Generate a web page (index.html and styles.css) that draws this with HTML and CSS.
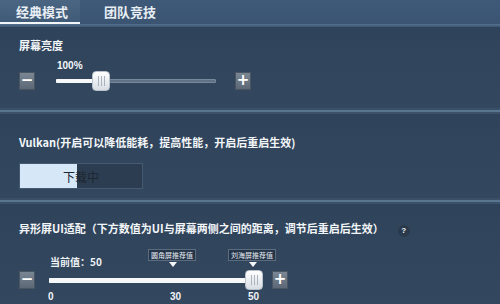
FILE: index.html
```html
<!DOCTYPE html>
<html lang="zh">
<head>
<meta charset="utf-8">
<link rel="stylesheet" href="styles.css">
</head>
<body>
<div class="screen">
  <div class="tabs">
    <div class="tab active">经典模式</div>
    <div class="tab">团队竞技</div>
  </div>
  <div class="tabline"></div>

  <div class="section s1">
    <div class="label">屏幕亮度</div>
    <div class="slider-row">
      <div class="btn">−</div>
      <div class="track t1">
        <div class="fill" style="width:27%"></div>
        <div class="value">100%</div>
        <div class="thumb" style="left:35px"><i></i><i></i><i></i></div>
      </div>
      <div class="btn">+</div>
    </div>
  </div>
  <div class="sep"></div>

  <div class="section s2">
    <div class="label">Vulkan(开启可以降低能耗，提高性能，开启后重启生效)</div>
    <div class="progress">
      <div class="pfill" style="width:47%"></div>
      <span class="ptext">下载中</span>
    </div>
  </div>
  <div class="sep"></div>

  <div class="section s3">
    <div class="label">异形屏UI适配（下方数值为UI与屏幕两侧之间的距离，调节后重启后生效）<span class="help">?</span></div>
    <div class="slider3">
      <div class="cur">当前值：50</div>
      <div class="slider-row r3">
        <div class="btn">−</div>
        <div class="track t3">
          <div class="fill" style="width:100%"></div>
          <div class="tip" style="left:98px">圆角屏推荐值</div>
          <div class="tip" style="left:178px">刘海屏推荐值</div>
          <div class="thumb" style="left:195px"><i></i><i></i><i></i></div>
          <div class="tick" style="left:-2px">0</div>
          <div class="tick" style="left:120px">30</div>
          <div class="tick" style="left:198px">50</div>
        </div>
        <div class="btn">+</div>
      </div>
    </div>
  </div>
</div>
</body>
</html>
```
FILE: styles.css
```css
* { box-sizing: border-box; margin: 0; padding: 0; }
html, body { width: 500px; height: 304px; overflow: hidden; }
body {
  font-family: "Noto Sans CJK SC", "Noto Sans", sans-serif;
  background: #31455c;
  color: #f2f5f8;
}
.screen { width: 500px; height: 304px; display: flex; flex-direction: column; }

.tabs {
  height: 24px;
  display: flex;
  background: linear-gradient(#3f5a78, #3a5472);
}
.tab {
  width: 80px;
  font-size: 13px;
  font-weight: bold;
  line-height: 24px;
  color: #e8eef4;
  padding-left: 22px;
}
.tab.active {
  background: linear-gradient(#4a6683, #3f5a77);
  padding-left: 16px;
  box-shadow: inset 0 -2px 0 #f4f7fa;
}
.tab + .tab { padding-left: 24px; }
.tabline { height: 3px; background: linear-gradient(#56728f, #3d5570); }

.section { background: linear-gradient(#2f435a, #33485f); padding-left: 19px; }
.label { font-size: 11px; font-weight: bold; line-height: 14px; color: #f3f6f9; }

.s1 { height: 81px; padding-top: 11px; }
.sep {
  height: 6px;
  background: linear-gradient(#3a5069 0, #3a5069 2px, #5a7590 2px, #5a7590 4px, #3c526b 4px);
}

.slider-row { display: flex; align-items: center; }
.s1 .slider-row { margin-top: 20px; }
.btn {
  width: 16px; height: 18px;
  background: linear-gradient(#7a8694, #5c6876);
  border: 1px solid #4a5562;
  color: #fff;
  font-size: 15px;
  font-weight: bold;
  line-height: 15px;
  text-align: center;
  font-family: "DejaVu Sans", sans-serif;
  flex: none;
}
.track {
  position: relative;
  height: 4px;
  background: #5f7184;
  border: 1px solid #77889a;
  border-radius: 1px;
}
.fill {
  position: absolute; left: -1px; top: -1px; bottom: -1px;
  background: #f6f8fa;
  border-radius: 1px;
}
.t1 { width: 160px; margin-left: 21px; margin-right: 19px; }
.value {
  position: absolute; left: 0; top: -20px;
  font-size: 10px; font-weight: bold; color: #f5f7f9;
  font-family: "Liberation Sans", sans-serif;
}
.thumb {
  position: absolute; top: -9px;
  width: 18px; height: 20px;
  background: linear-gradient(#ffffff, #d7dde3);
  border-radius: 4px;
  border: 1px solid #b9c2cb;
  display: flex; justify-content: center; align-items: center; gap: 2px;
}
.thumb i { display: block; width: 1px; height: 10px; background: #aab3bd; }

.s2 { height: 84px; padding-top: 21px; }
.progress {
  position: relative;
  margin-top: 14px;
  width: 124px; height: 26px;
  background: #2c3d51;
  border: 1px solid #445a72;
}
.pfill { position: absolute; left: 0; top: 0; bottom: 0; background: #d6e8f8; }
.ptext {
  position: absolute; left: 43px; top: 4px;
  font-size: 12px; color: #1e2630;
}

.s3 { flex: 1; padding-top: 17px; }
.help {
  display: inline-block;
  width: 12px; height: 12px;
  margin-left: 14px;
  border-radius: 50%;
  background: #2a3a4c;
  font-size: 8px; line-height: 12px; text-align: center;
  font-family: "Liberation Sans", sans-serif;
}
.slider3 { padding-top: 19px; }
.cur {
  margin-left: 31px;
  font-size: 10px; font-weight: bold; line-height: 12px; color: #eef2f6;
}
.r3 { margin-top: 3px; }
.t3 {
  width: 206px; margin-left: 14px; margin-right: 17px;
  height: 5px; border-color: #f6f8fa;
}
.tip {
  position: absolute; top: -30px;
  width: 48px; height: 12px;
  background: #26364a;
  border: 1px solid #5b6c7e;
  font-size: 7px; line-height: 10px; text-align: center; color: #e6ebf0;
}
.tip::after {
  content: ""; position: absolute; left: 20px; top: 12px;
  border-left: 4px solid transparent; border-right: 4px solid transparent;
  border-top: 5px solid #f4f6f8;
}
.t3 .thumb { top: -9px; }
.tick {
  position: absolute; top: 12px;
  font-size: 10px; font-weight: bold; color: #f1f4f7;
  font-family: "Liberation Sans", sans-serif;
}
```
